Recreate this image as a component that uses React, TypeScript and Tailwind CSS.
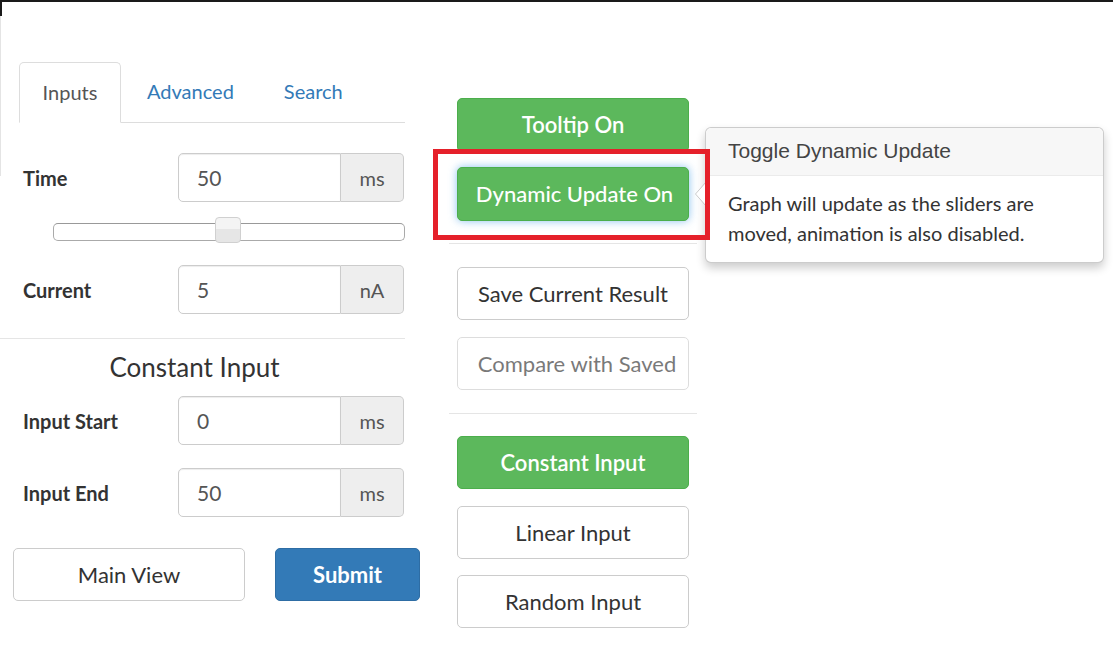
import React from "react";

type Unit = { label: string; value: string; unit: string };

function InputRow({ label, value, unit }: Unit) {
  return (
    <div className="flex items-center">
      <label className="w-[178px] pl-[23px] text-[20px] font-bold text-[#333]">{label}</label>
      <div className="flex h-[49px] w-[226px]">
        <input
          readOnly
          value={value}
          className="min-w-0 flex-1 rounded-l-[5px] border border-[#ccc] bg-white px-[18px] text-[21px] text-[#555] shadow-[inset_0_1px_1px_rgba(0,0,0,0.075)] outline-none"
        />
        <span className="flex w-[63px] items-center justify-center rounded-r-[5px] border border-l-0 border-[#ccc] bg-[#eee] text-[20px] text-[#555]">
          {unit}
        </span>
      </div>
    </div>
  );
}

function Btn({
  children,
  variant = "default",
  className = "",
}: {
  children: React.ReactNode;
  variant?: "default" | "success" | "primary" | "disabled";
  className?: string;
}) {
  const styles = {
    default: "bg-white border-[#ccc] text-[#333]",
    disabled: "bg-white border-[#ccc] text-[#333] opacity-65",
    success: "bg-[#5cb85c] border-[#4cae4c] text-white",
    primary: "bg-[#337ab7] border-[#2e6da4] text-white",
  }[variant];
  return (
    <button
      className={`flex items-center justify-center rounded-[5px] border text-[22px] leading-none ${styles} ${className}`}
    >
      {children}
    </button>
  );
}

export default function App() {
  return (
    <div className="relative h-[650px] w-[1116px] overflow-hidden bg-white font-[Lato,'Liberation_Sans',sans-serif]">
      <div className="w-[1113px] border-t-2 border-[#1a1a1a]" />
      <div className="absolute left-0 top-0 h-[16px] w-[2px] bg-[#1a1a1a]" />
      <div className="absolute left-0 top-[16px] h-[160px] w-px bg-[#e4e4e4]" />

      <div className="flex">
        {/* left panel */}
        <div className="flex w-[420px] flex-col">
          <div className="ml-[19px] mt-[60px] flex w-[386px] border-b border-[#ddd]">
            <div className="-mb-px mr-[2px] flex h-[61px] w-[102px] items-center justify-center rounded-t-[5px] border border-[#ddd] border-b-white bg-white pb-[2px] text-[20px] text-[#555]">
              Inputs
            </div>
            <div className="mr-[2px] flex h-[60px] items-center px-[24px] pb-[2px] text-[20px] text-[#337ab7]">Advanced</div>
            <div className="flex h-[60px] items-center px-[24px] pb-[2px] text-[20px] text-[#337ab7]">Search</div>
          </div>

          <div className="mt-[30px]">
            <InputRow label="Time" value="50" unit="ms" />
          </div>

          <div className="ml-[53px] mt-[17px] flex h-[26px] w-[352px] items-center">
            <div className="relative h-[18px] w-full rounded-[5px] border border-[#aaa] border-t-[#999] bg-white">
              <div className="absolute left-[161px] top-[-7px] h-[26px] w-[26px] rounded-[4px] border border-[#d0d0d0] bg-[linear-gradient(#f4f4f4_45%,#e6e6e6_45%)]" />
            </div>
          </div>

          <div className="mt-[20px]">
            <InputRow label="Current" value="5" unit="nA" />
          </div>

          <div className="mt-[24px] h-px w-[405px] bg-[#e5e5e5]" />

          <h3 className="mt-[13px] w-[389px] text-center text-[26px] leading-[30px] text-[#333]">Constant Input</h3>

          <div className="mt-[14px]">
            <InputRow label="Input Start" value="0" unit="ms" />
          </div>
          <div className="mt-[23px]">
            <InputRow label="Input End" value="50" unit="ms" />
          </div>

          <div className="ml-[13px] mt-[31px] flex gap-[30px]">
            <Btn className="h-[53px] w-[232px]">Main View</Btn>
            <Btn variant="primary" className="h-[53px] w-[145px] font-bold">
              Submit
            </Btn>
          </div>
        </div>

        {/* middle controls */}
        <div className="ml-[29px] flex w-[248px] flex-col px-[8px]">
          <Btn variant="success" className="mt-[96px] h-[54px] w-[232px] font-semibold">
            Tooltip On
          </Btn>
          <Btn
            variant="success"
            className="mt-[15px] h-[54px] w-[232px] pl-[3px] font-medium shadow-[0_0_8px_rgba(102,175,233,0.75)]"
          >
            Dynamic Update On
          </Btn>
          <div className="-mx-[8px] mt-[22px] h-px bg-[#e5e5e5]" />
          <Btn className="mt-[23px] h-[53px] w-[232px]">Save Current Result</Btn>
          <Btn variant="disabled" className="mt-[17px] h-[53px] w-[232px] pl-[8px]">
            Compare with Saved
          </Btn>
          <div className="-mx-[8px] mt-[23px] h-px bg-[#e5e5e5]" />
          <Btn variant="success" className="mt-[22px] h-[53px] w-[232px] font-semibold">
            Constant Input
          </Btn>
          <Btn className="mt-[17px] h-[53px] w-[232px]">Linear Input</Btn>
          <Btn className="mt-[16px] h-[53px] w-[232px]">Random Input</Btn>
        </div>
      </div>

      {/* popover */}
      <div className="absolute left-[705px] top-[127px] w-[399px] rounded-[6px] border border-[rgba(0,0,0,0.2)] bg-white shadow-[0_5px_10px_rgba(0,0,0,0.2)]">
        <div className="flex h-[48px] items-center rounded-t-[6px] border-b border-[#ebebeb] bg-[#f7f7f7] px-[22px] pb-[1px] font-['Liberation_Sans',Arial,sans-serif] text-[21px] text-[#444]">
          Toggle Dynamic Update
        </div>
        <div className="px-[22px] pb-[14px] pt-[12px] text-[20px] leading-[30px] text-[#333]">
          Graph will update as the sliders are
          <br />
          moved, animation is also disabled.
        </div>
        <svg className="absolute left-[-11px] top-[53px]" width="12" height="26" viewBox="0 0 12 26">
          <path d="M12 0 L0.5 13 L12 26 Z" fill="white" />
          <path d="M12 0 L0.5 13 L12 26" fill="none" stroke="rgba(0,0,0,0.2)" strokeWidth="1" />
        </svg>
      </div>

      {/* annotation box */}
      <div className="pointer-events-none absolute left-[433px] top-[149px] h-[91px] w-[277px] border-[5px] border-[#e5202a]" />
    </div>
  );
}
